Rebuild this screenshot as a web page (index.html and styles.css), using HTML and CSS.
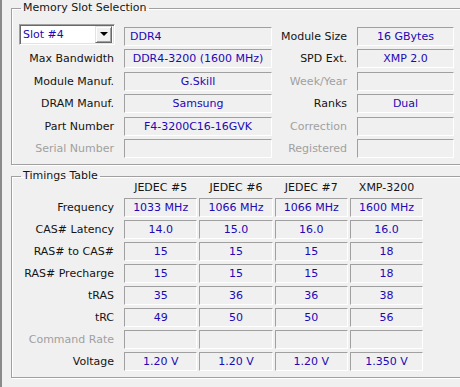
FILE: index.html
```html
<!DOCTYPE html>
<html lang="en">
<head>
    <meta charset="UTF-8">
    <title>SPD</title>
    <link rel="stylesheet" href="styles.css">
</head>
<body>
    <fieldset class="group slot-group">
        <legend>Memory Slot Selection</legend>
        <div class="slot-grid">
            <div class="slot-select">
                <span class="slot-value">Slot #4</span>
                <span class="drop-button">
                    <svg width="8" height="4" viewBox="0 0 8 4"><polygon points="0,0 8,0 4,4" fill="#000"/></svg>
                </span>
            </div>
            <div class="field left">DDR4</div>
            <div class="label">Module Size</div>
            <div class="field">16 GBytes</div>

            <div class="label">Max Bandwidth</div>
            <div class="field">DDR4-3200 (1600 MHz)</div>
            <div class="label">SPD Ext.</div>
            <div class="field">XMP 2.0</div>

            <div class="label">Module Manuf.</div>
            <div class="field">G.Skill</div>
            <div class="label disabled">Week/Year</div>
            <div class="field"></div>

            <div class="label">DRAM Manuf.</div>
            <div class="field">Samsung</div>
            <div class="label">Ranks</div>
            <div class="field">Dual</div>

            <div class="label">Part Number</div>
            <div class="field">F4-3200C16-16GVK</div>
            <div class="label disabled">Correction</div>
            <div class="field"></div>

            <div class="label disabled">Serial Number</div>
            <div class="field"></div>
            <div class="label disabled">Registered</div>
            <div class="field"></div>
        </div>
    </fieldset>

    <fieldset class="group timings-group">
        <legend>Timings Table</legend>
        <div class="timings-grid">
            <div></div>
            <div class="col-head">JEDEC #5</div>
            <div class="col-head">JEDEC #6</div>
            <div class="col-head">JEDEC #7</div>
            <div class="col-head">XMP-3200</div>

            <div class="label">Frequency</div>
            <div class="field">1033 MHz</div>
            <div class="field">1066 MHz</div>
            <div class="field">1066 MHz</div>
            <div class="field">1600 MHz</div>

            <div class="label">CAS# Latency</div>
            <div class="field">14.0</div>
            <div class="field">15.0</div>
            <div class="field">16.0</div>
            <div class="field">16.0</div>

            <div class="label">RAS# to CAS#</div>
            <div class="field">15</div>
            <div class="field">15</div>
            <div class="field">15</div>
            <div class="field">18</div>

            <div class="label">RAS# Precharge</div>
            <div class="field">15</div>
            <div class="field">15</div>
            <div class="field">15</div>
            <div class="field">18</div>

            <div class="label">tRAS</div>
            <div class="field">35</div>
            <div class="field">36</div>
            <div class="field">36</div>
            <div class="field">38</div>

            <div class="label">tRC</div>
            <div class="field">49</div>
            <div class="field">50</div>
            <div class="field">50</div>
            <div class="field">56</div>

            <div class="label disabled">Command Rate</div>
            <div class="field"></div>
            <div class="field"></div>
            <div class="field"></div>
            <div class="field"></div>

            <div class="label">Voltage</div>
            <div class="field">1.20 V</div>
            <div class="field">1.20 V</div>
            <div class="field">1.20 V</div>
            <div class="field">1.350 V</div>
        </div>
    </fieldset>
</body>
</html>
```

FILE: styles.css
```css
html, body {
    margin: 0;
    padding: 0;
    overflow: hidden;
    background-color: #f0f0f0;
}
body {
    font-family: "DejaVu Sans", Verdana, sans-serif;
    font-size: 11px;
    color: #000000;
    height: 387px;
    box-sizing: border-box;
    border-left: 2px solid #8a8a8a;
}
.group {
    width: 454px;
    min-width: 0;
    margin: 0 0 0 9px;
    padding: 0;
    border: 1px solid #a0a0a0;
    box-shadow: inset 1px 1px 0 #ffffff, 1px 1px 0 #ffffff;
}
.group legend {
    margin-left: 9px;
    padding: 0 2px;
    line-height: 14px;
    color: #141414;
}
.slot-group {
    margin-top: 1px;
}
.timings-group {
    margin-top: 4px;
}
.label {
    text-align: right;
    white-space: nowrap;
    line-height: 19px;
    color: #141414;
}
.label.disabled {
    color: #a0a0a0;
}
.field {
    box-sizing: border-box;
    border: 1px solid;
    border-color: #a0a0a0 #ffffff #ffffff #a0a0a0;
    line-height: 17px;
    text-align: center;
    white-space: nowrap;
    overflow: hidden;
    color: #2208b4;
}
.field.left {
    text-align: left;
    padding-left: 5px;
}

/* memory slot selection */
.slot-grid {
    display: grid;
    grid-template-columns: 112px 148px 85px 97px;
    grid-auto-rows: 19px;
    row-gap: 3.5px;
    padding: 11.5px 0 6px;
}
.slot-grid .label {
    padding-right: 10px;
}
.slot-select {
    box-sizing: border-box;
    width: 96px;
    height: 21px;
    margin: -3px 0 0 7px;
    background-color: #ffffff;
    border: 1px solid;
    border-color: #a0a0a0 #ffffff #ffffff #a0a0a0;
    box-shadow: inset 1px 1px 0 #696969, inset -1px -1px 0 #e3e3e3;
    display: flex;
    align-items: center;
    justify-content: space-between;
    padding: 2px;
}
.slot-value {
    color: #2208b4;
    padding-left: 1px;
}
.drop-button {
    box-sizing: border-box;
    width: 17px;
    height: 17px;
    background-color: #f0f0f0;
    border: 1px solid;
    border-color: #e3e3e3 #696969 #696969 #e3e3e3;
    box-shadow: inset 1px 1px 0 #ffffff, inset -1px -1px 0 #a0a0a0;
    display: flex;
    align-items: center;
    justify-content: center;
}
.drop-button svg {
    display: block;
}

/* timings table */
.timings-grid {
    display: grid;
    grid-template-columns: 110px repeat(4, 73.3px);
    grid-template-rows: 12px;
    grid-auto-rows: 19px;
    column-gap: 2px;
    row-gap: 3px;
    padding: 0 0 6px;
}
.timings-grid .label {
    padding-right: 8px;
}
.col-head {
    text-align: center;
    line-height: 10px;
    white-space: nowrap;
    color: #141414;
}
```
